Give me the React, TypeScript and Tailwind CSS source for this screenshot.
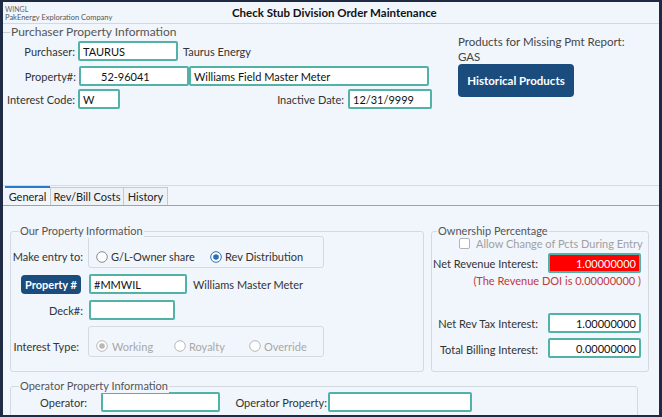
import React from "react";

const inp =
  "h-[20px] shrink-0 bg-white border-2 border-[#52b2a8] rounded-[2px] text-[11px] leading-none flex items-center px-[3px] text-[#111] whitespace-nowrap";

function Radio({ checked, disabled }: { checked?: boolean; disabled?: boolean }) {
  const c = disabled ? "#b8b8b8" : "#8a8a8a";
  return (
    <svg width="12" height="12" viewBox="0 0 12 12" className="shrink-0">
      <circle cx="6" cy="6" r="5.3" fill="white" stroke={checked && !disabled ? "#2a6fb5" : c} strokeWidth="1" />
      {checked && <circle cx="6" cy="6" r="2.8" fill={disabled ? "#b8b8b8" : "#2a6fb5"} />}
    </svg>
  );
}

export default function App() {
  return (
    <div className="w-[662px] h-[417px] overflow-hidden bg-[#1f2b45] pt-[2px] pl-[3px] pr-[3px] pb-[2px] font-['Lato',sans-serif] whitespace-nowrap">
      <div className="w-full h-full bg-[#f1f6fc] flex flex-col overflow-hidden text-[#333] text-[11px] leading-[15px]">
        {/* Header */}
        <div className="h-[22px] shrink-0 flex border-b border-[#d3d8de]">
          <div className="flex flex-col pl-[2px] w-[229px] shrink-0">
            <div className="text-[7px] leading-[8px] mt-[3px] text-[#666]">WINGL</div>
            <div className="text-[7.5px] leading-[10px] text-[#555]">PakEnergy Exploration Company</div>
          </div>
          <div className="text-[11.5px] font-bold text-[#111] leading-[22px]">
            Check Stub Division Order Maintenance
          </div>
        </div>

        {/* Purchaser section */}
        <div className="h-[162px] shrink-0 flex flex-col border-b border-[#d6dbe1]">
          <div className="flex items-center h-[14px] mt-[1px]">
            <div className="w-[7px] h-px bg-[#c8cdd3]" />
            <div className="text-[12px] text-[#555] ml-[1px] leading-none">Purchaser Property Information</div>
          </div>
          <div className="flex">
            <div className="w-[449px] shrink-0 flex flex-col">
              <div className="flex items-center mt-[2px]">
                <div className="w-[72px] shrink-0 text-right">Purchaser:</div>
                <div className={`${inp} w-[100px] ml-[3px]`}>TAURUS</div>
                <div className="ml-[5px]">Taurus Energy</div>
              </div>
              <div className="flex items-center mt-[5px]">
                <div className="w-[73px] shrink-0 text-right">Property#:</div>
                <div className={`${inp} w-[110px] ml-[3px] pl-[20px]`}>52-96041</div>
                <div className={`${inp} w-[240px]`}>Williams Field Master Meter</div>
              </div>
              <div className="flex items-center mt-[3px]">
                <div className="w-[72px] shrink-0 text-right">Interest Code:</div>
                <div className={`${inp} w-[42px] ml-[3px]`}>W</div>
                <div className="w-[224px] shrink-0 text-right">Inactive Date:</div>
                <div className={`${inp} w-[84px] ml-[4px]`}>12/31/9999</div>
              </div>
            </div>
            <div className="flex flex-col ml-[6px] -mt-[5px]">
              <div className="text-[11.5px] text-[#444] leading-[15px]">Products for Missing Pmt Report:</div>
              <div className="text-[11.5px] text-[#444] leading-[15px]">GAS</div>
              <div className="mt-[0px] w-[116px] h-[33px] rounded-[4px] bg-[#1b4c7e] text-white text-[11.5px] font-bold flex items-center justify-center">
                Historical Products
              </div>
            </div>
          </div>
        </div>

        {/* Tabs */}
        <div className="h-[20px] shrink-0 flex items-end border-b border-[#9ea4ab] pl-[2px]">
          <div className="h-[19px] w-[45px] text-center border-t-2 border-[#2a78c8] leading-[17px] text-[#222]">General</div>
          <div className="h-[18px] w-[74px] text-center border border-b-0 border-[#c5cad0] bg-[#eef2f6] leading-[17px] text-[#222]">Rev/Bill Costs</div>
          <div className="h-[18px] w-[44px] text-center border border-b-0 border-l-0 border-[#c5cad0] bg-[#eef2f6] leading-[17px] text-[#222]">History</div>
        </div>

        {/* Tab content */}
        <div className="flex flex-col pl-[7px]">
          <div className="flex mt-[25px]">
            {/* Our Property Information */}
            <div className="relative w-[414px] shrink-0 h-[141px] border border-[#d5dae0] rounded-[3px] flex flex-col">
              <div className="absolute -top-[8px] left-[8px] bg-[#f1f6fc] px-[1px] leading-[14px] text-[#555]">
                Our Property Information
              </div>
              <div className="flex items-center mt-[4px]">
                <div className="w-[72px] shrink-0 text-right mt-[9px]">Make entry to:</div>
                <div className="ml-[5px] w-[236px] shrink-0 h-[32px] border border-[#d5dae0] rounded-[3px] flex items-center pt-[9px] pl-[7px]">
                  <div className="w-[114px] flex items-center shrink-0">
                    <Radio />
                    <span className="ml-[3px]">G/L-Owner share</span>
                  </div>
                  <div className="flex items-center">
                    <Radio checked />
                    <span className="ml-[3px]">Rev Distribution</span>
                  </div>
                </div>
              </div>
              <div className="flex items-center mt-[6px]">
                <div className="ml-[10px] w-[60px] shrink-0 h-[19px] rounded-[4px] bg-[#1b4c7e] text-white font-bold flex items-center justify-center">
                  Property #
                </div>
                <div className={`${inp} w-[98px] ml-[8px]`}>#MMWIL</div>
                <div className="ml-[6px]">Williams Master Meter</div>
              </div>
              <div className="flex items-center mt-[6px]">
                <div className="w-[72px] shrink-0 text-right">Deck#:</div>
                <div className={`${inp} w-[86px] ml-[6px]`}></div>
              </div>
              <div className="flex items-center mt-[6px]">
                <div className="w-[68px] shrink-0 text-right mt-[9px]">Interest Type:</div>
                <div className="ml-[9px] w-[236px] shrink-0 h-[31px] border border-[#d5dae0] rounded-[3px] flex items-center pt-[9px] pl-[7px] text-[#a8a8a8]">
                  <div className="w-[78px] flex items-center shrink-0">
                    <Radio checked disabled />
                    <span className="ml-[4px]">Working</span>
                  </div>
                  <div className="w-[75px] flex items-center shrink-0">
                    <Radio disabled />
                    <span className="ml-[3px]">Royalty</span>
                  </div>
                  <div className="flex items-center">
                    <Radio disabled />
                    <span className="ml-[3px]">Override</span>
                  </div>
                </div>
              </div>
            </div>

            {/* Ownership Percentage */}
            <div className="relative ml-[7px] w-[218px] shrink-0 h-[141px] border border-[#d5dae0] rounded-[3px] flex flex-col">
              <div className="absolute -top-[8px] left-[5px] bg-[#f1f6fc] px-[1px] leading-[14px] text-[#555]">
                Ownership Percentage
              </div>
              <div className="flex items-center mt-[4px] ml-[27px]">
                <div className="w-[11px] h-[11px] shrink-0 border border-[#b4b4b4] rounded-[2px] bg-white" />
                <div className="ml-[6px] text-[#a0a0a0]">Allow Change of Pcts During Entry</div>
              </div>
              <div className="flex items-center mt-[2px]">
                <div className="w-[106px] shrink-0 text-right">Net Revenue Interest:</div>
                <div className={`${inp} w-[93px] ml-[10px] justify-end bg-[#ff0000]! text-white!`}>1.00000000</div>
              </div>
              <div className="text-[#c0393b] text-right pr-[7px]">(The Revenue DOI is 0.00000000 )</div>
              <div className="flex items-center mt-[25px]">
                <div className="w-[106px] shrink-0 text-right">Net Rev Tax Interest:</div>
                <div className={`${inp} w-[93px] ml-[10px] justify-end`}>1.00000000</div>
              </div>
              <div className="flex items-center mt-[5px]">
                <div className="w-[106px] shrink-0 text-right mt-[2px]">Total Billing Interest:</div>
                <div className={`${inp} w-[93px] ml-[10px] justify-end`}>0.00000000</div>
              </div>
            </div>
          </div>

          {/* Operator */}
          <div className="relative mt-[14px] w-[628px] shrink-0 h-[40px] border border-[#d5dae0] rounded-[3px] flex items-start">
            <div className="absolute -top-[8px] left-[8px] bg-[#f1f6fc] px-[1px] leading-[14px] text-[#555]">
              Operator Property Information
            </div>
            <div className="flex items-center mt-[5px]">
              <div className="w-[76px] shrink-0 text-right">Operator:</div>
              <div className={`${inp} w-[119px] ml-[14px]`}></div>
              <div className="w-[107px] shrink-0 text-right">Operator Property:</div>
              <div className={`${inp} w-[144px] ml-[1px]`}></div>
            </div>
          </div>
        </div>
      </div>
    </div>
  );
}
